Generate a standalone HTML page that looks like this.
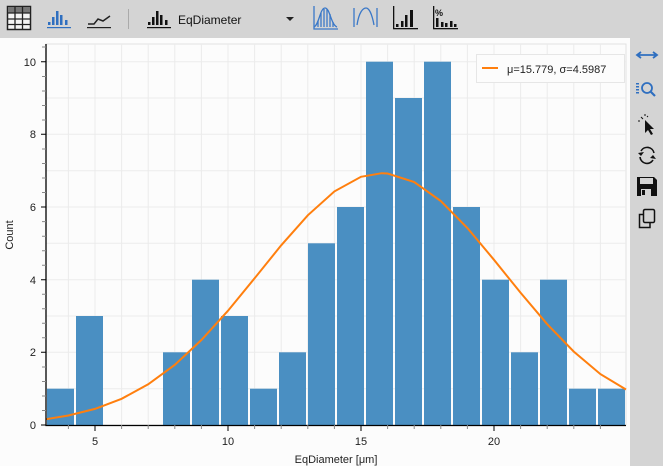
<!DOCTYPE html>
<html><head><meta charset="utf-8"><style>
body{margin:0;width:663px;height:466px;overflow:hidden;background:#d4d4d4;font-family:"Liberation Sans",sans-serif;position:relative}
svg{position:absolute;left:0;top:0}
</style></head><body>
<svg width="663" height="466" viewBox="0 0 663 466" font-family="Liberation Sans, sans-serif">
<rect x="0" y="0" width="663" height="38" fill="#d4d4d4"/>
<rect x="0" y="38" width="630" height="428" fill="#fcfcfc"/>
<rect x="630" y="38" width="33" height="428" fill="#d4d4d4"/>
<!-- toolbar -->
<g>
<rect x="7.5" y="6.5" width="23" height="23" fill="#f4f4f4" stroke="#222" stroke-width="1.5"/>
<rect x="8" y="7" width="22" height="6" fill="#777"/>
<path d="M8 13H30M8 19H30M8 24.5H30M15 7V30M22.5 7V30" stroke="#222" stroke-width="1.3"/>
<g fill="#2f6fc0"><rect x="48" y="22" width="2.5" height="3"/><rect x="52" y="17" width="2.5" height="8"/><rect x="56" y="11" width="2.5" height="14"/><rect x="60" y="15" width="2.5" height="10"/><rect x="65" y="20" width="2.5" height="5"/><rect x="47" y="27" width="24" height="1.2"/></g>
<path d="M88 24L94 24L98 19L103 21L110 16" fill="none" stroke="#222" stroke-width="1.5"/><rect x="87" y="27" width="24" height="1.2" fill="#222"/>
<rect x="128" y="9" width="1" height="20" fill="#aaa"/>
<g fill="#111"><rect x="148" y="22" width="2.5" height="3"/><rect x="152" y="17" width="2.5" height="8"/><rect x="156" y="11" width="2.5" height="14"/><rect x="160" y="15" width="2.5" height="10"/><rect x="165" y="20" width="2.5" height="5"/><rect x="147" y="27" width="24" height="1.2"/></g>
<text x="178" y="24" font-size="12" fill="#111">EqDiameter</text>
<path d="M286 17h8l-4 4z" fill="#222"/>
<g stroke="#3a78c8" fill="none" stroke-width="1.3"><path d="M314 6V29H338"/><path d="M314 27C319 25 320 8 325 8S331 25 337 27"/><path d="M318 27V21M321 27V13M324 27V9M327 27V9M330 27V14M333 27V22"/></g>
<g stroke="#3a78c8" fill="none" stroke-width="1.3"><path d="M354 8V27M377 8V27"/><path d="M357 25C359 12 363 8 366 8S372 14 374 25"/></g>
<g fill="#111"><rect x="393" y="6" width="1.3" height="23"/><rect x="393" y="28" width="25" height="1.3"/><rect x="396" y="24" width="2.5" height="3"/><rect x="401" y="21" width="2.5" height="6"/><rect x="405" y="15" width="2.5" height="12"/><rect x="410" y="10" width="3" height="17"/></g>
<g fill="#111"><rect x="433" y="6" width="1.3" height="23"/><rect x="433" y="28" width="25" height="1.3"/><text x="435" y="16" font-size="9" font-weight="bold">%</text><rect x="436" y="18" width="2.5" height="9"/><rect x="441" y="22" width="2.5" height="5"/><rect x="445" y="23" width="2.5" height="4"/><rect x="450" y="21" width="2.5" height="6"/><rect x="454" y="24" width="2.5" height="3"/></g>
</g>
<!-- right toolbar -->
<g>
<path d="M638 55H656M641 52L637 55L641 58M653 52L657 55L653 58" stroke="#2f6fc0" stroke-width="1.8" fill="none"/>
<g fill="#2f6fc0"><rect x="636" y="83" width="3" height="1.5"/><rect x="636" y="86" width="3" height="1.5"/><rect x="636" y="89" width="3" height="1.5"/><rect x="636" y="92" width="3" height="1.5"/></g>
<circle cx="647" cy="88" r="5" stroke="#2f6fc0" stroke-width="1.8" fill="none"/><path d="M651 92L655 96" stroke="#2f6fc0" stroke-width="2.2"/>
<path d="M645 120L645 133L648 130L651 135L653 134L650 129L654 129Z" fill="#111"/>
<path d="M641 117L643 119M645 114V116M638 121H640M648 116L647 117" stroke="#111" stroke-width="1"/>
<path d="M654 153A7 7 0 0 0 641 151M640 157A7 7 0 0 0 653 160" stroke="#111" stroke-width="1.6" fill="none"/>
<path d="M638 153L641 156L644 152Z M650 158L653 155L656 159Z" fill="#111"/>
<path d="M637 177H654L657 180V196H637Z" fill="#111"/><rect x="640" y="178" width="13" height="6" fill="#d4d4d4"/><rect x="641" y="189" width="10" height="7" fill="#d4d4d4"/><rect x="642" y="190" width="3" height="5" fill="#111"/>
<rect x="643.5" y="209.5" width="11" height="13" rx="1.5" fill="none" stroke="#111" stroke-width="1.5"/>
<path d="M643 214.5H639.5V227.5H650V223" fill="none" stroke="#111" stroke-width="1.5"/>
</g>
<!-- plot frame & grid -->
<rect x="46" y="44" width="580" height="381" fill="#fcfcfc" stroke="#e2e2e2"/>
<g stroke="#ebebeb" stroke-width="1">
<path d="M68.4 44V425M95 44V425M121.6 44V425M148.2 44V425M174.8 44V425M201.4 44V425M228 44V425M254.6 44V425M281.2 44V425M307.8 44V425M334.4 44V425M361 44V425M387.6 44V425M414.2 44V425M440.8 44V425M467.4 44V425M494 44V425M520.6 44V425M547.2 44V425M573.8 44V425M600.4 44V425"/>
<path d="M46 388.7H626M46 352.3H626M46 316H626M46 279.7H626M46 243.3H626M46 207H626M46 170.7H626M46 134.3H626M46 98H626M46 61.7H626"/>
</g>
<!-- bars -->
<g fill="#4a8fc2">
<rect x="47" y="388.7" width="27" height="36.3"/>
<rect x="76" y="316" width="27" height="109"/>
<rect x="163" y="352.3" width="27" height="72.7"/>
<rect x="192" y="279.7" width="27" height="145.3"/>
<rect x="221" y="316" width="27" height="109"/>
<rect x="250" y="388.7" width="27" height="36.3"/>
<rect x="279" y="352.3" width="27" height="72.7"/>
<rect x="308" y="243.3" width="27" height="181.7"/>
<rect x="337" y="207" width="27" height="218"/>
<rect x="366" y="61.7" width="27" height="363.3"/>
<rect x="395" y="98" width="27" height="327"/>
<rect x="424" y="61.7" width="27" height="363.3"/>
<rect x="453" y="207" width="27" height="218"/>
<rect x="482" y="279.7" width="27" height="145.3"/>
<rect x="511" y="352.3" width="27" height="72.7"/>
<rect x="540" y="279.7" width="27" height="145.3"/>
<rect x="569" y="388.7" width="27" height="36.3"/>
<rect x="598" y="388.7" width="27" height="36.3"/>
</g>
<polyline fill="none" stroke="#ff7f0e" stroke-width="2" points="46,419.2 68.4,415.5 95,408.9 121.6,398.8 148.2,384.3 174.8,364.8 201.4,340 228,310.7 254.6,278.3 281.2,245.3 307.8,215.3 334.4,191.4 361,176.8 381.7,173.2 387.6,173.5 414.2,182 440.8,201 467.4,228 494,259.8 520.6,292.8 547.2,324.2 573.8,351.6 600.4,374.1 626,389.5"/>
<!-- axes -->
<path d="M46 44V425.5H626" stroke="#000" stroke-width="1.3" fill="none"/>
<g stroke="#000" stroke-width="1"><path d="M41 425H46M41 352.3H46M41 279.7H46M41 207H46M41 134.3H46M41 61.7H46M95 425V431M228 425V431M361 425V431M494 425V431"/></g>
<g stroke="#888" stroke-width="1"><path d="M42 410.5H46M42 396H46M42 381.5H46M42 367H46M42 337.8H46M42 323.3H46M42 308.8H46M42 294.2H46M42 265.2H46M42 250.7H46M42 236.2H46M42 221.6H46M42 192.5H46M42 178H46M42 163.5H46M42 149H46M42 120H46M42 105.5H46M42 91H46M42 76.5H46M42 47H46"/>
<path d="M68.4 425V429M121.6 425V429M148.2 425V429M174.8 425V429M201.4 425V429M254.6 425V429M281.2 425V429M307.8 425V429M334.4 425V429M387.6 425V429M414.2 425V429M440.8 425V429M467.4 425V429M520.6 425V429M547.2 425V429M573.8 425V429M600.4 425V429"/></g>
<g font-size="11" fill="#222" text-anchor="end">
<text x="36" y="429">0</text><text x="36" y="356">2</text><text x="36" y="284">4</text><text x="36" y="211">6</text><text x="36" y="138">8</text><text x="36" y="66">10</text>
</g>
<g font-size="11" fill="#222" text-anchor="middle">
<text x="95" y="445">5</text><text x="228" y="445">10</text><text x="361" y="445">15</text><text x="494" y="445">20</text>
<text x="336" y="463">EqDiameter [μm]</text>
<text transform="translate(13,235) rotate(-90)">Count</text>
</g>
<!-- legend -->
<rect x="476.5" y="54.5" width="148" height="28" fill="#fcfcfc" stroke="#e6e6e6"/>
<path d="M482 68H498" stroke="#ff7f0e" stroke-width="2"/>
<text x="507" y="73" font-size="11" fill="#222">μ=15.779, σ=4.5987</text>
</svg>
</body></html>
